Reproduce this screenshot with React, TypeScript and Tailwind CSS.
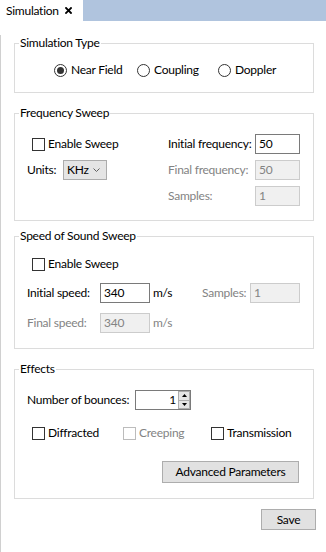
import type { ReactNode } from "react";

const font = { fontFamily: 'Lato, "Noto Sans", sans-serif' };

function Radio({ label, checked = false, className = "" }: { label: string; checked?: boolean; className?: string }) {
  return (
    <div className={`flex items-center ${className}`}>
      <span className="flex h-[13px] w-[13px] items-center justify-center rounded-full border border-[#333333] bg-white">
        {checked ? <span className="h-[7px] w-[7px] rounded-full bg-[#333333]" /> : null}
      </span>
      <span className="ml-[4px]">{label}</span>
    </div>
  );
}

function Check({ label, disabled = false, className = "" }: { label: string; disabled?: boolean; className?: string }) {
  return (
    <div className={`flex items-center ${className}`}>
      <span
        className={`h-[13px] w-[13px] shrink-0 border bg-white ${disabled ? "border-[#bcbcbc]" : "border-[#333333]"}`}
      />
      <span className={`ml-[3px] ${disabled ? "text-[#838383]" : "text-black"}`}>{label}</span>
    </div>
  );
}

function Field({ value, disabled = false, width = "w-[45px]" }: { value: string; disabled?: boolean; width?: string }) {
  return (
    <div
      className={`flex h-[20px] shrink-0 items-center border pl-[3px] ${width} ${
        disabled ? "border-[#cccccc] bg-[#f0f0f0] text-[#838383]" : "border-[#7a7a7a] bg-white text-black"
      }`}
    >
      {value}
    </div>
  );
}

function Group({ title, height, className = "", children }: { title: string; height: string; className?: string; children: ReactNode }) {
  return (
    <fieldset className={`m-0 w-[300px] border border-[#dcdcdc] p-0 ${height} ${className}`}>
      <legend className="ml-[4px] px-[1px] leading-[16px]">{title}</legend>
      {children}
    </fieldset>
  );
}

export default function App() {
  return (
    <div
      className="h-[552px] w-[326px] overflow-hidden whitespace-nowrap bg-white text-[12px] leading-[16px] tracking-[-0.25px] text-black"
      style={font}
    >
      <div className="flex h-[21px]">
        <div className="flex w-[83px] items-center bg-white pl-[6px]">
          <span className="w-[59px]">Simulation</span>
          <svg width="7" height="7" viewBox="0 0 7 7">
            <path d="M1 1 L6 6 M6 1 L1 6" stroke="#000" strokeWidth="1.8" strokeLinecap="square" />
          </svg>
        </div>
        <div className="flex-1 bg-[#b0c4de]" />
      </div>

      <div className="h-[531px] border-l border-[#d0d0d0] pl-[13px]">
        <Group title="Simulation Type" height="h-[58px]" className="mt-[14px]">
          <div className="flex pl-[39px] pt-[11px]">
            <Radio label="Near Field" checked className="w-[83px]" />
            <Radio label="Coupling" className="w-[81px]" />
            <Radio label="Doppler" />
          </div>
        </Group>

        <Group title="Frequency Sweep" height="h-[116px]" className="mt-[12px]">
          <div className="flex pt-[13px]">
            <div className="flex w-[153px] flex-col gap-[6px]">
              <div className="flex h-[20px] items-center pl-[17px]">
                <Check label="Enable Sweep" />
              </div>
              <div className="flex h-[20px] items-center pl-[12px]">
                <span className="w-[36px]">Units:</span>
                <div className="flex h-[20px] w-[44px] items-center justify-between border border-[#acacac] bg-[#e5e5e5] pl-[3px] pr-[6px]">
                  <span>KHz</span>
                  <svg width="7" height="4" viewBox="0 0 7 4">
                    <path d="M0.5 0.5 L3.5 3.5 L6.5 0.5" fill="none" stroke="#606060" strokeWidth="1" />
                  </svg>
                </div>
              </div>
            </div>
            <div className="flex flex-col gap-[6px]">
              <div className="flex h-[20px] items-center">
                <span className="w-[87px]">Initial frequency:</span>
                <Field value="50" />
              </div>
              <div className="flex h-[20px] items-center">
                <span className="w-[87px] text-[#838383]">Final frequency:</span>
                <Field value="50" disabled />
              </div>
              <div className="flex h-[20px] items-center">
                <span className="w-[87px] text-[#838383]">Samples:</span>
                <Field value="1" disabled />
              </div>
            </div>
          </div>
        </Group>

        <Group title="Speed of Sound Sweep" height="h-[121px]" className="mt-[7px]">
          <div className="flex flex-col pl-[12px] pt-[10px]">
            <div className="flex h-[20px] items-center pl-[5px]">
              <Check label="Enable Sweep" />
            </div>
            <div className="mt-[9px] flex h-[20px] items-center">
              <span className="w-[73px]">Initial speed:</span>
              <Field value="340" width="w-[50px]" />
              <span className="w-[52px] pl-[3px]">m/s</span>
              <span className="w-[48px] text-[#838383]">Samples:</span>
              <Field value="1" disabled width="w-[50px]" />
            </div>
            <div className="mt-[10px] flex h-[20px] items-center">
              <span className="w-[73px] text-[#838383]">Final speed:</span>
              <Field value="340" disabled width="w-[50px]" />
              <span className="pl-[3px] text-[#838383]">m/s</span>
            </div>
          </div>
        </Group>

        <Group title="Effects" height="h-[138px]" className="mt-[12px]">
          <div className="flex flex-col pl-[12px] pt-[13px]">
            <div className="flex h-[20px] items-center">
              <span className="w-[108px]">Number of bounces:</span>
              <div className="flex h-[20px] w-[56px] items-stretch border border-[#7a7a7a] bg-white">
                <span className="flex flex-1 items-center justify-end pr-[2px]">1</span>
                <div className="flex w-[12px] flex-col">
                  <span className="flex flex-1 items-center justify-center border border-[#acacac] bg-[#e5e5e5]">
                    <svg width="5" height="3" viewBox="0 0 5 3">
                      <path d="M0 3 L2.5 0 L5 3 Z" fill="#000" />
                    </svg>
                  </span>
                  <span className="flex flex-1 items-center justify-center border border-t-0 border-[#acacac] bg-[#e5e5e5]">
                    <svg width="5" height="3" viewBox="0 0 5 3">
                      <path d="M0 0 L2.5 3 L5 0 Z" fill="#000" />
                    </svg>
                  </span>
                </div>
              </div>
            </div>
            <div className="mt-[13px] flex h-[20px] items-center pl-[5px]">
              <Check label="Diffracted" className="w-[91px]" />
              <Check label="Creeping" disabled className="w-[88px]" />
              <Check label="Transmission" />
            </div>
            <div className="mt-[18px] flex pl-[135px]">
              <button
                type="button"
                className="flex h-[22px] w-[137px] items-center justify-center border border-[#adadad] bg-[#e1e1e1]"
              >
                Advanced Parameters
              </button>
            </div>
          </div>
        </Group>

        <div className="mt-[10px] flex w-[302px] justify-end">
          <button
            type="button"
            className="flex h-[21px] w-[55px] items-center justify-center border border-[#adadad] bg-[#e1e1e1]"
          >
            Save
          </button>
        </div>
      </div>
    </div>
  );
}
